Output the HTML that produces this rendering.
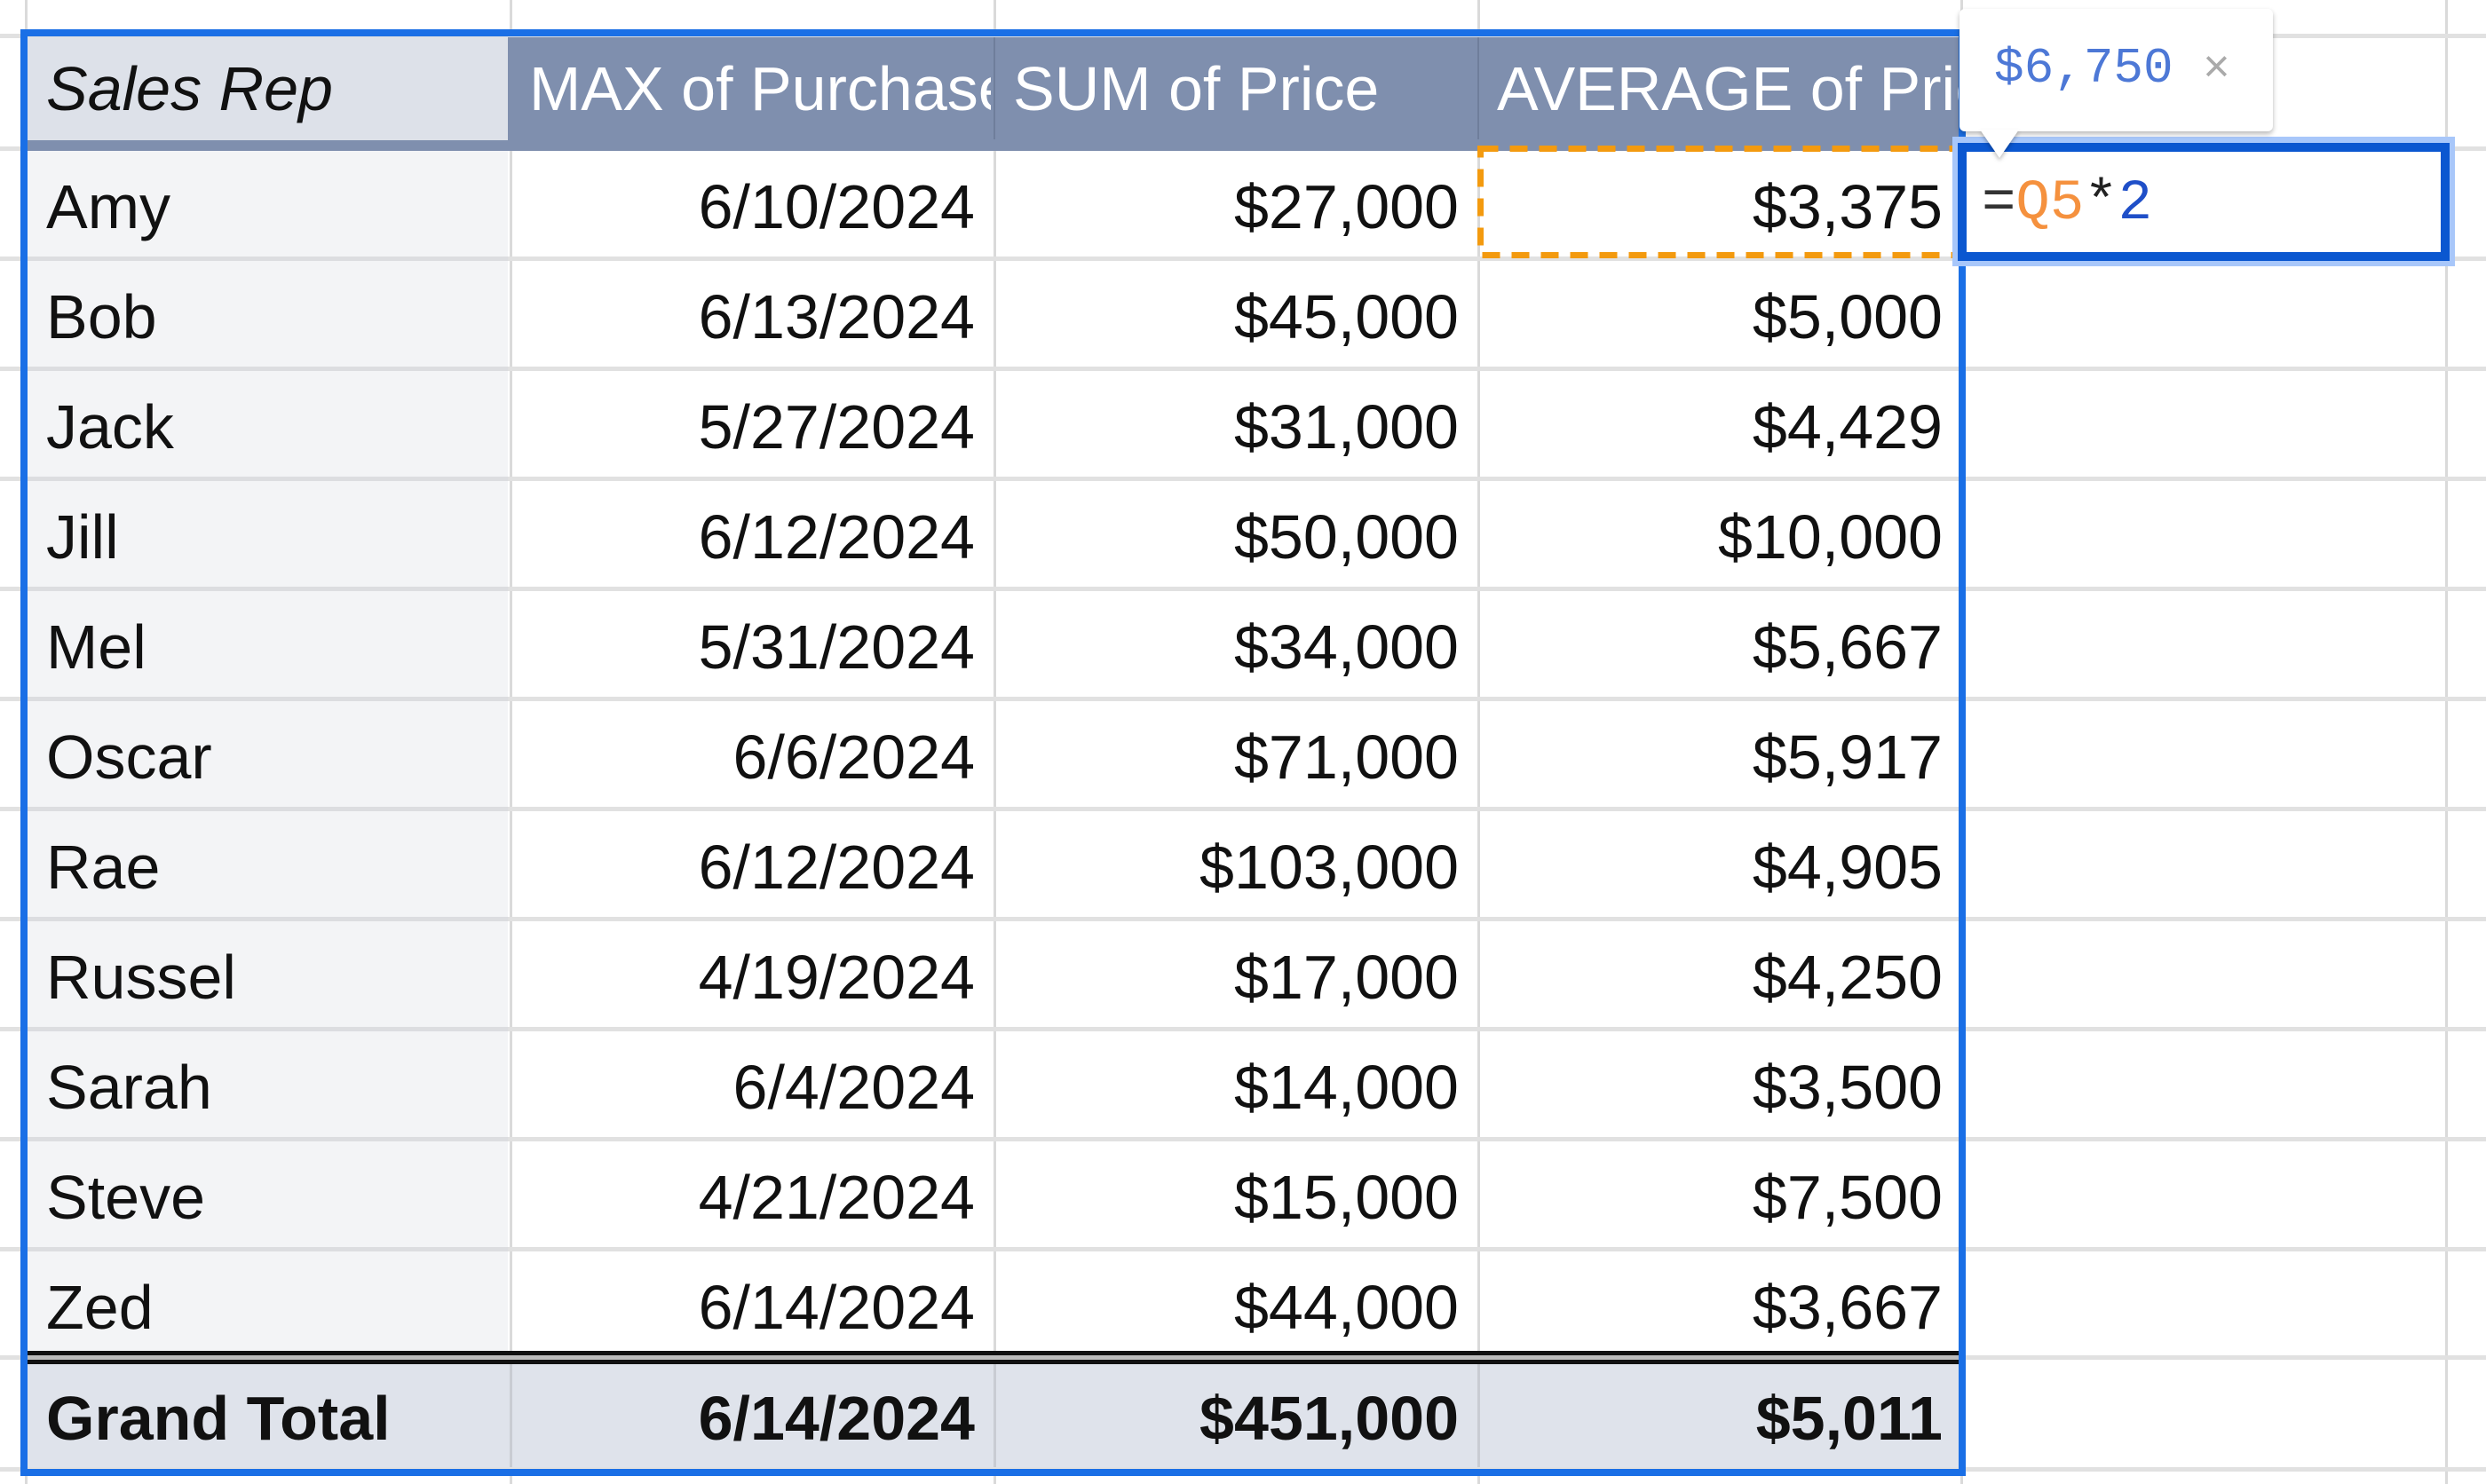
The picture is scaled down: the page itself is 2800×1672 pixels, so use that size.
<!DOCTYPE html>
<html><head><meta charset="utf-8"><style>
*{margin:0;padding:0;box-sizing:border-box}
body{width:2800px;height:1672px;background:#fff;position:relative;overflow:hidden;font-family:"Liberation Sans",Arial,sans-serif;font-size:70px;color:#111}
.a{position:absolute}
.hl{position:absolute;height:5px;background:#e1e1e1}
.vl{position:absolute;width:3px;background:#dadada}
.c{position:absolute;height:124px;line-height:130px;white-space:nowrap;overflow:hidden}
.r{text-align:right;padding-right:22px}
.l{padding-left:22px}
.mono{font-family:"Liberation Mono","DejaVu Sans Mono",monospace}
</style></head><body>
<div class="vl" style="left:28px;top:0;height:1672px"></div>
<div class="vl" style="left:574px;top:0;height:1672px"></div>
<div class="vl" style="left:1119px;top:0;height:1672px"></div>
<div class="vl" style="left:1664px;top:0;height:1672px"></div>
<div class="vl" style="left:2208px;top:0;height:1672px"></div>
<div class="vl" style="left:2754px;top:0;height:1672px"></div>
<div class="hl" style="left:0;top:38px;width:2800px"></div>
<div class="hl" style="left:0;top:165px;width:2800px"></div>
<div class="hl" style="left:0;top:289px;width:2800px"></div>
<div class="hl" style="left:0;top:413px;width:2800px"></div>
<div class="hl" style="left:0;top:537px;width:2800px"></div>
<div class="hl" style="left:0;top:661px;width:2800px"></div>
<div class="hl" style="left:0;top:785px;width:2800px"></div>
<div class="hl" style="left:0;top:909px;width:2800px"></div>
<div class="hl" style="left:0;top:1033px;width:2800px"></div>
<div class="hl" style="left:0;top:1157px;width:2800px"></div>
<div class="hl" style="left:0;top:1281px;width:2800px"></div>
<div class="hl" style="left:0;top:1405px;width:2800px"></div>
<div class="hl" style="left:0;top:1527px;width:2800px"></div>
<div class="hl" style="left:0;top:1653px;width:2800px"></div>

<div class="a" style="left:30px;top:42px;width:2180px;height:128px;background:#7f8fae"></div>
<div class="a" style="left:30px;top:42px;width:542px;height:116px;background:#dde1e9"></div>
<div class="a" style="left:1119px;top:42px;width:2px;height:115px;background:#6f7e9b"></div>
<div class="a" style="left:1664px;top:42px;width:2px;height:115px;background:#6f7e9b"></div>
<div class="c l" style="left:30px;top:40px;width:542px;height:120px;line-height:120px;font-style:italic">Sales Rep</div>
<div class="c" style="left:596px;top:40px;width:520px;height:120px;line-height:120px;color:#fff">MAX of Purchase Date</div>
<div class="c" style="left:1141px;top:40px;width:520px;height:120px;line-height:120px;color:#fff">SUM of Price</div>
<div class="c" style="left:1686px;top:40px;width:522px;height:120px;line-height:120px;color:#fff">AVERAGE of Price</div>

<div class="a" style="left:30px;top:170px;width:542px;height:1352px;background:#f3f4f6"></div>
<div class="hl" style="left:30px;top:289px;width:542px;background:#dcdde0"></div>
<div class="hl" style="left:30px;top:413px;width:542px;background:#dcdde0"></div>
<div class="hl" style="left:30px;top:537px;width:542px;background:#dcdde0"></div>
<div class="hl" style="left:30px;top:661px;width:542px;background:#dcdde0"></div>
<div class="hl" style="left:30px;top:785px;width:542px;background:#dcdde0"></div>
<div class="hl" style="left:30px;top:909px;width:542px;background:#dcdde0"></div>
<div class="hl" style="left:30px;top:1033px;width:542px;background:#dcdde0"></div>
<div class="hl" style="left:30px;top:1157px;width:542px;background:#dcdde0"></div>
<div class="hl" style="left:30px;top:1281px;width:542px;background:#dcdde0"></div>
<div class="hl" style="left:30px;top:1405px;width:542px;background:#dcdde0"></div>

<div class="c l" style="left:30px;top:168px;width:542px">Amy</div><div class="c r" style="left:575px;top:168px;width:545px">6/10/2024</div><div class="c r" style="left:1120px;top:168px;width:545px">$27,000</div><div class="c r" style="left:1665px;top:168px;width:545px">$3,375</div>
<div class="c l" style="left:30px;top:292px;width:542px">Bob</div><div class="c r" style="left:575px;top:292px;width:545px">6/13/2024</div><div class="c r" style="left:1120px;top:292px;width:545px">$45,000</div><div class="c r" style="left:1665px;top:292px;width:545px">$5,000</div>
<div class="c l" style="left:30px;top:416px;width:542px">Jack</div><div class="c r" style="left:575px;top:416px;width:545px">5/27/2024</div><div class="c r" style="left:1120px;top:416px;width:545px">$31,000</div><div class="c r" style="left:1665px;top:416px;width:545px">$4,429</div>
<div class="c l" style="left:30px;top:540px;width:542px">Jill</div><div class="c r" style="left:575px;top:540px;width:545px">6/12/2024</div><div class="c r" style="left:1120px;top:540px;width:545px">$50,000</div><div class="c r" style="left:1665px;top:540px;width:545px">$10,000</div>
<div class="c l" style="left:30px;top:664px;width:542px">Mel</div><div class="c r" style="left:575px;top:664px;width:545px">5/31/2024</div><div class="c r" style="left:1120px;top:664px;width:545px">$34,000</div><div class="c r" style="left:1665px;top:664px;width:545px">$5,667</div>
<div class="c l" style="left:30px;top:788px;width:542px">Oscar</div><div class="c r" style="left:575px;top:788px;width:545px">6/6/2024</div><div class="c r" style="left:1120px;top:788px;width:545px">$71,000</div><div class="c r" style="left:1665px;top:788px;width:545px">$5,917</div>
<div class="c l" style="left:30px;top:912px;width:542px">Rae</div><div class="c r" style="left:575px;top:912px;width:545px">6/12/2024</div><div class="c r" style="left:1120px;top:912px;width:545px">$103,000</div><div class="c r" style="left:1665px;top:912px;width:545px">$4,905</div>
<div class="c l" style="left:30px;top:1036px;width:542px">Russel</div><div class="c r" style="left:575px;top:1036px;width:545px">4/19/2024</div><div class="c r" style="left:1120px;top:1036px;width:545px">$17,000</div><div class="c r" style="left:1665px;top:1036px;width:545px">$4,250</div>
<div class="c l" style="left:30px;top:1160px;width:542px">Sarah</div><div class="c r" style="left:575px;top:1160px;width:545px">6/4/2024</div><div class="c r" style="left:1120px;top:1160px;width:545px">$14,000</div><div class="c r" style="left:1665px;top:1160px;width:545px">$3,500</div>
<div class="c l" style="left:30px;top:1284px;width:542px">Steve</div><div class="c r" style="left:575px;top:1284px;width:545px">4/21/2024</div><div class="c r" style="left:1120px;top:1284px;width:545px">$15,000</div><div class="c r" style="left:1665px;top:1284px;width:545px">$7,500</div>
<div class="c l" style="left:30px;top:1408px;width:542px">Zed</div><div class="c r" style="left:575px;top:1408px;width:545px">6/14/2024</div><div class="c r" style="left:1120px;top:1408px;width:545px">$44,000</div><div class="c r" style="left:1665px;top:1408px;width:545px">$3,667</div>

<div class="a" style="left:30px;top:1522px;width:2180px;height:5px;background:#111"></div>
<div class="a" style="left:30px;top:1527px;width:2180px;height:5px;background:#bbb"></div>
<div class="a" style="left:30px;top:1532px;width:2180px;height:5px;background:#111"></div>
<div class="a" style="left:30px;top:1537px;width:2180px;height:116px;background:#dfe3eb"></div>
<div class="a" style="left:574px;top:1537px;width:3px;height:116px;background:#c9ccd3"></div>
<div class="a" style="left:1119px;top:1537px;width:3px;height:116px;background:#c9ccd3"></div>
<div class="a" style="left:1664px;top:1537px;width:3px;height:116px;background:#c9ccd3"></div>
<div class="c l" style="left:30px;top:1537px;width:542px;height:116px;line-height:122px;font-weight:bold">Grand Total</div>
<div class="c r" style="left:575px;top:1537px;width:545px;height:116px;line-height:122px;font-weight:bold">6/14/2024</div>
<div class="c r" style="left:1120px;top:1537px;width:545px;height:116px;line-height:122px;font-weight:bold">$451,000</div>
<div class="c r" style="left:1665px;top:1537px;width:545px;height:116px;line-height:122px;font-weight:bold">$5,011</div>

<div class="a" style="left:23px;top:33px;width:2191px;height:1630px;border:8px solid #1a6fe6"></div>

<svg class="a" style="left:1660px;top:160px" width="560" height="136">
<rect x="7.5" y="7.5" width="545" height="120" fill="none" stroke="#f39a0f" stroke-width="7" stroke-dasharray="20 13"/>
</svg>

<div class="a" style="left:2199px;top:154px;width:566px;height:146px;background:#a8c7fa"></div>
<div class="a" style="left:2205px;top:161px;width:554px;height:133px;border:10px solid #0b57d0;background:#fff"></div>
<div class="a mono" style="left:2232px;top:168px;height:120px;line-height:124px;font-size:64px"><span style="color:#333">=</span><span style="color:#f5913e">Q5</span><span style="color:#222">*</span><span style="color:#1f4fc8">2</span></div>

<div class="a" style="left:2207px;top:10px;width:353px;height:138px;background:#fff;border-radius:6px;box-shadow:0 3px 6px rgba(0,0,0,.28)"></div>
<div class="a" style="left:2230px;top:146px;width:0;height:0;border-left:22px solid transparent;border-right:22px solid transparent;border-top:32px solid #fff;filter:drop-shadow(0 3px 2px rgba(0,0,0,.25))"></div>
<div class="a mono" style="left:2246px;top:30px;line-height:90px;font-size:56px;color:#4d78d6;white-space:nowrap">$6,750 <span style="font-family:'Liberation Sans',sans-serif;color:#aaa;font-size:52px">×</span></div>
</body></html>
